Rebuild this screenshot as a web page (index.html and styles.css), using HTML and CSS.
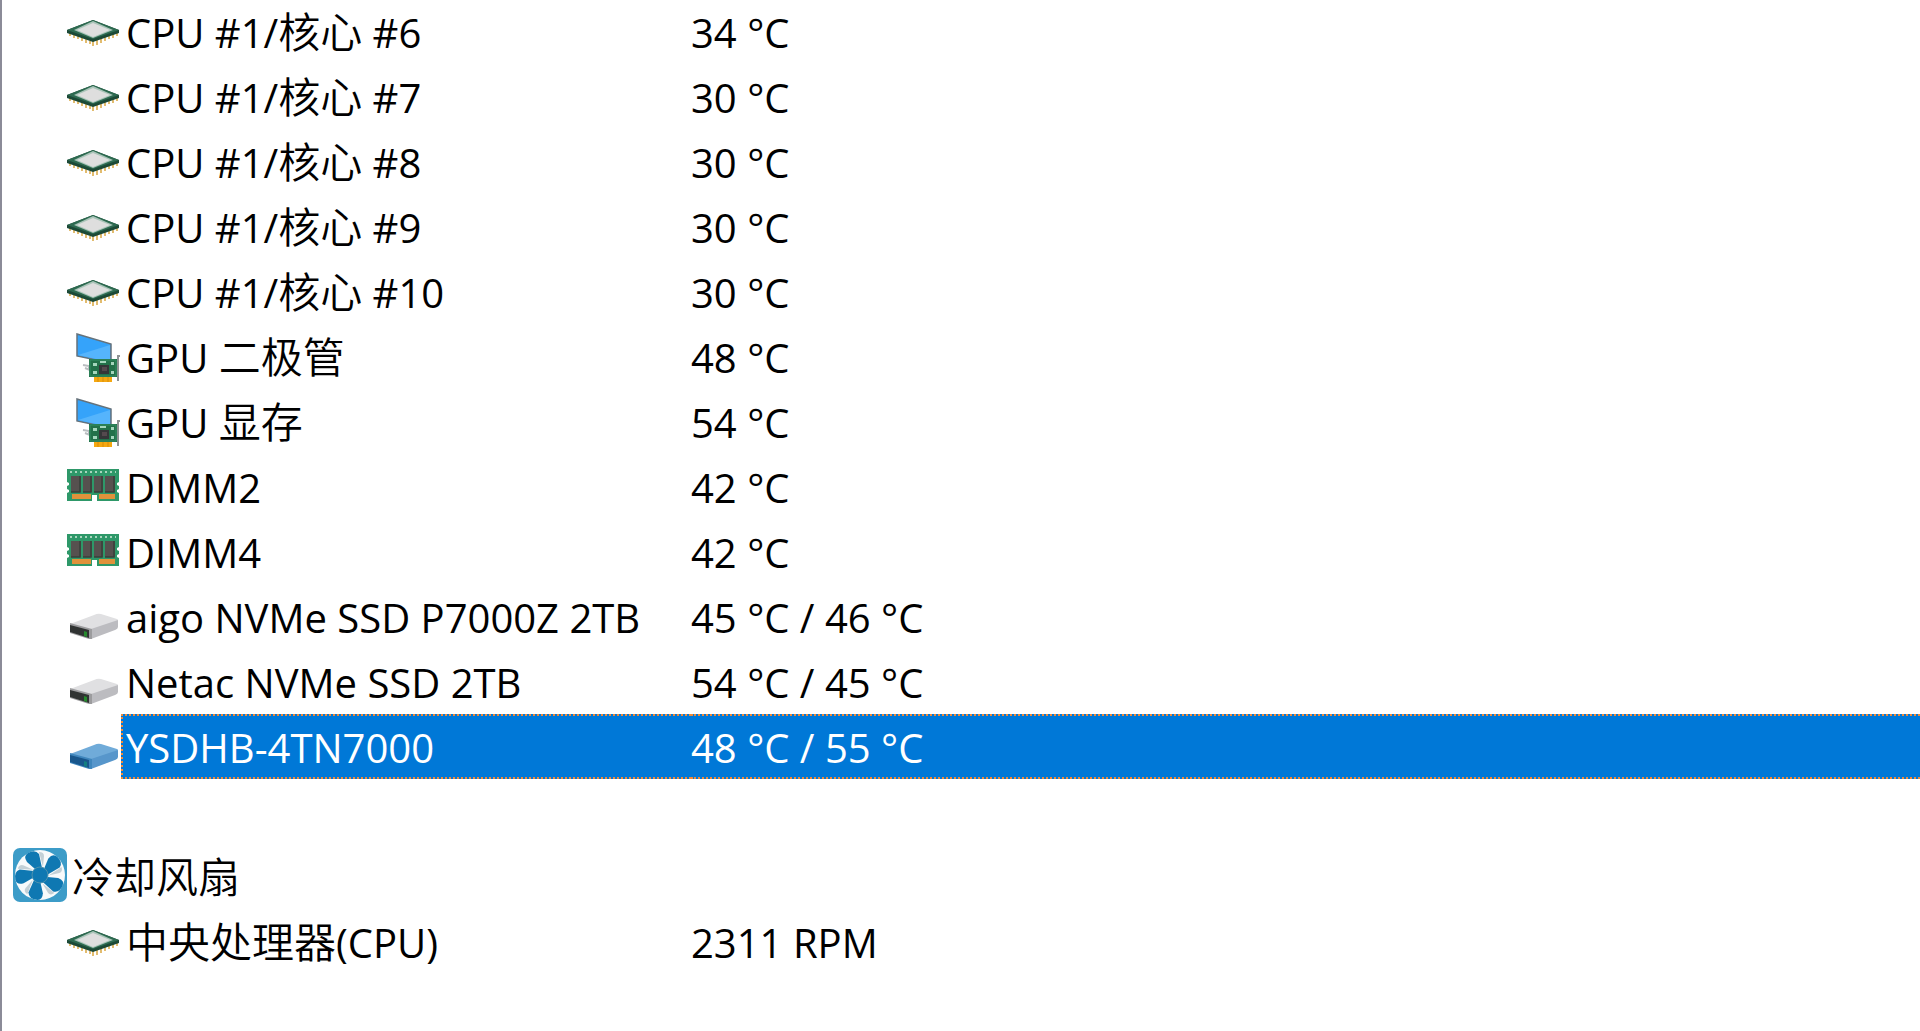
FILE: index.html
```html
<!DOCTYPE html>
<html lang="zh-CN">
<head>
<meta charset="UTF-8" />
<meta name="viewport" content="width=device-width, initial-scale=1" />
<title>传感器</title>
<link rel="stylesheet" href="styles.css">
</head>
<body>
  <!-- Shared icons -->
  <svg class="sprite" aria-hidden="true">
    <symbol id="cpu" viewBox="0 0 54 54">
      <path d="M3 29v4M7 31v4M11 32v4M15 34v4M19 36v4M23 38v3M26 38v5M30 37v5M34 35v5M38 34v4M42 32v4M46 30v5M50 29v4" stroke="#d9a640" stroke-width="1.5"/>
      <path d="M26 17L52 27v3L26 39L0 30v-3z" fill="#1c4936"/>
      <path d="M26 17L52 27L26 36L0 27z" fill="#2d6a50"/>
      <path d="M26 18L46 27L26 35L7 27z" fill="#a9c4b8"/>
      <path d="M26 20L43 27L26 34L10 27z" fill="#dedede"/>
    </symbol>
    <symbol id="gpu" viewBox="0 0 54 54">
      <path d="M16 37l6 1v4M18 40l5 2" fill="none" stroke="#b9bdc0" stroke-width="2"/>
      <path d="M10 6L44 16V35L10 28z" fill="#35a3fa" stroke="#65727b" stroke-width="1.5"/>
      <path d="M11 27L43 17V34z" fill="#55b4fc"/>
      <path d="M53 28h-2v25" fill="none" stroke="#8f9394" stroke-width="2"/>
      <path d="M27 49h18v5h-18z" fill="#f5a811"/>
      <path d="M31 49v5M36 49v5M41 49v5" stroke="#d98c0b"/>
      <path d="M22 31h28v18h-28z" fill="#23714a"/>
      <path d="M23 32h26v16h-26z" fill="none" stroke="#349064"/>
      <path d="M32 37h10v9h-10z" fill="#353638"/>
      <path d="M35 39h5v4h-5z" fill="#55494e"/>
      <path d="M26 35h4v3h-4zM44 34h3v3h-3zM26 43h4v3h-4zM44 43h3v3h-3zM33 33h6v2h-6z" fill="#a5d6bd"/>
    </symbol>
    <symbol id="dimm" viewBox="0 0 54 54">
      <path d="M0 11h52v13l-2 1v2l2 1v3l-2 1v2l2 1v8H30v-6h-5v6H0V35l2-1v-2l-2-1v-3l2-1v-2l-2-1z" fill="#2e9869"/>
      <path d="M3 14h46" stroke="#a8d5bd" stroke-width="2" stroke-dasharray="2 3"/>
      <path d="M4 18h10v16H4zM16 18h9v16h-9zM27 18h9v16h-9zM38 18h10v16H38z" fill="#56514f"/>
      <path d="M13 18v16H4M24 18v16h-8M35 18v16h-8M47 18v16h-9" fill="none" stroke="#39403b" stroke-width="1.5"/>
      <path d="M5 36h19v5H5zM32 36h16v5H32z" fill="#e0923b"/>
    </symbol>
    <symbol id="drive" viewBox="0 0 54 54">
      <path class="drive-top" d="M3 36L27 27Q31 25 34 26L50 31Q52 32 50 33L25 42z"/>
      <path class="drive-side" d="M24 41L51 32V39Q51 41 48 42L24 51z"/>
      <path class="drive-edge" d="M3 35L25 41V51L22 51L3 45z"/>
      <path class="drive-front" d="M3 37L22 42V50L3 44z"/>
      <path class="drive-led" d="M17 43l3 1v5l-3-1z"/>
    </symbol>
    <symbol id="fan" viewBox="0 0 54 54">
      <rect width="54" height="54" rx="7" fill="#3c9cc8"/>
      <circle cx="27" cy="27" r="25" fill="#f7fafb"/>
      <g fill="#c3d0d6">
        <path id="shade" d="M30 19L31 8Q31 4 26 4z"/>
        <use href="#shade" transform="rotate(72 27 27)"/>
        <use href="#shade" transform="rotate(144 27 27)"/>
        <use href="#shade" transform="rotate(216 27 27)"/>
        <use href="#shade" transform="rotate(288 27 27)"/>
      </g>
      <g fill="#0f78b2">
        <path id="blade" d="M22 21L14 14Q10 8 15 5Q22 1 26 6L29 20z"/>
        <use href="#blade" transform="rotate(72 27 27)"/>
        <use href="#blade" transform="rotate(144 27 27)"/>
        <use href="#blade" transform="rotate(216 27 27)"/>
        <use href="#blade" transform="rotate(288 27 27)"/>
      </g>
      <circle cx="27" cy="27" r="8" fill="#0f78b2" stroke="#4c91ae"/>
    </symbol>
  </svg>

  <table class="sensor-list">
    <tbody>
      <tr class="row">
        <td class="icon"><svg><use href="#cpu"/></svg></td>
        <td class="name">CPU #1/<span class="zh">核心</span> #6</td>
        <td class="value">34 °C</td>
      </tr>
      <tr class="row">
        <td class="icon"><svg><use href="#cpu"/></svg></td>
        <td class="name">CPU #1/<span class="zh">核心</span> #7</td>
        <td class="value">30 °C</td>
      </tr>
      <tr class="row">
        <td class="icon"><svg><use href="#cpu"/></svg></td>
        <td class="name">CPU #1/<span class="zh">核心</span> #8</td>
        <td class="value">30 °C</td>
      </tr>
      <tr class="row">
        <td class="icon"><svg><use href="#cpu"/></svg></td>
        <td class="name">CPU #1/<span class="zh">核心</span> #9</td>
        <td class="value">30 °C</td>
      </tr>
      <tr class="row">
        <td class="icon"><svg><use href="#cpu"/></svg></td>
        <td class="name">CPU #1/<span class="zh">核心</span> #10</td>
        <td class="value">30 °C</td>
      </tr>
      <tr class="row">
        <td class="icon"><svg><use href="#gpu"/></svg></td>
        <td class="name">GPU <span class="zh">二极管</span></td>
        <td class="value">48 °C</td>
      </tr>
      <tr class="row">
        <td class="icon"><svg><use href="#gpu"/></svg></td>
        <td class="name">GPU <span class="zh">显存</span></td>
        <td class="value">54 °C</td>
      </tr>
      <tr class="row">
        <td class="icon"><svg><use href="#dimm"/></svg></td>
        <td class="name">DIMM2</td>
        <td class="value">42 °C</td>
      </tr>
      <tr class="row">
        <td class="icon"><svg><use href="#dimm"/></svg></td>
        <td class="name">DIMM4</td>
        <td class="value">42 °C</td>
      </tr>
      <tr class="row">
        <td class="icon"><svg><use href="#drive"/></svg></td>
        <td class="name">aigo NVMe SSD P7000Z 2TB</td>
        <td class="value">45 °C / 46 °C</td>
      </tr>
      <tr class="row">
        <td class="icon"><svg><use href="#drive"/></svg></td>
        <td class="name">Netac NVMe SSD 2TB</td>
        <td class="value">54 °C / 45 °C</td>
      </tr>
      <tr class="row selected">
        <td class="icon"><svg><use href="#drive"/></svg></td>
        <td class="name">YSDHB-4TN7000</td>
        <td class="value">48 °C / 55 °C</td>
      </tr>
    </tbody>
    <tbody class="section">
      <tr class="row group">
        <td class="icon"><svg><use href="#fan"/></svg></td>
        <th class="name" scope="rowgroup"><span class="zh">冷却风扇</span></th>
      </tr>
      <tr class="row">
        <td class="icon"><svg><use href="#cpu"/></svg></td>
        <td class="name"><span class="zh">中央处理器</span>(CPU)</td>
        <td class="value">2311 RPM</td>
      </tr>
    </tbody>
  </table>
</body>
</html>
```
FILE: styles.css
```css
* {
  box-sizing: border-box;
}

body {
  margin: 0;
  min-height: 100vh;
  border-left: 2px solid #8b8b98;
  background: #fff;
  color: #000;
  font-family: "Open Sans", "Noto Sans CJK SC", sans-serif;
  font-size: 40px;
  line-height: 63px;
}

.sprite {
  position: absolute;
  width: 0;
  height: 0;
}

.sensor-list,
.sensor-list tbody {
  display: block;
}

/* first row is scrolled slightly under the top edge */
.sensor-list {
  margin-top: -1px;
}

.section {
  margin-top: 65px;
}

.row {
  display: flex;
  height: 65px;
  padding-left: 65px;
}

.group {
  padding-left: 11px;
}

.row td,
.row th {
  padding: 0;
  font-weight: 400;
  text-align: left;
  white-space: nowrap;
}

.row .icon {
  flex: none;
  width: 54px;
  padding-top: 4px;
}

.icon svg {
  display: block;
  width: 54px;
  height: 54px;
}

.row .name,
.row .value {
  border: 0 dotted transparent;
  border-width: 2px 0;
}

.row .name {
  flex: none;
  width: 570px;
  padding-left: 3px;
  border-left-width: 2px;
}

.row .value {
  flex: 1;
}

.zh {
  font-family: "Noto Sans CJK SC", sans-serif;
  font-size: 42px;
  font-weight: 350;
  line-height: 1;
}

/* Drive icon */
.drive-top { fill: var(--drive-top, #e0e0e2); }
.drive-side { fill: var(--drive-side, #bcbcc0); }
.drive-edge { fill: var(--drive-edge, #9c9c9e); }
.drive-front { fill: var(--drive-front, #303332); }
.drive-led { fill: var(--drive-led, #258a2c); }

/* Selected row */
.selected {
  --drive-top: #70abd9;
  --drive-side: #5796cb;
  --drive-edge: #3f86bd;
  --drive-front: #18568c;
  --drive-led: #137f80;
}

.selected .name,
.selected .value {
  background: #0078d7;
  border-color: #f08a38;
  color: #fff;
}
```
